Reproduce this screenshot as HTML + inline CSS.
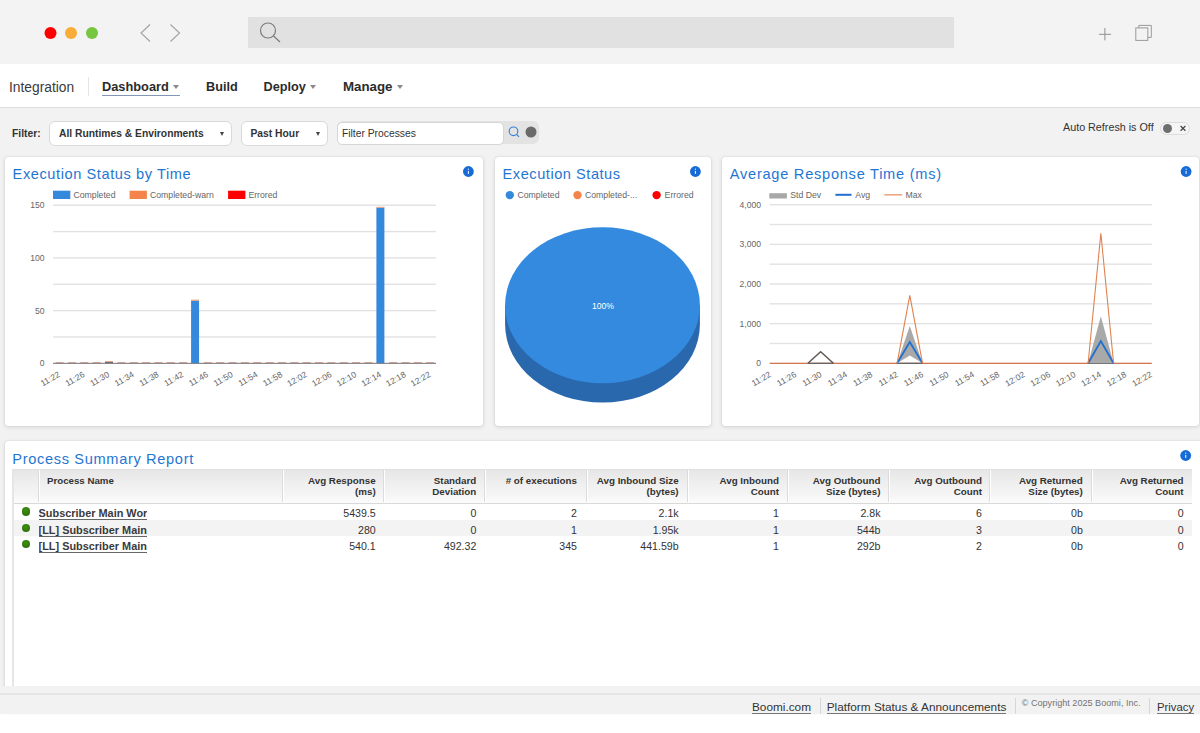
<!DOCTYPE html>
<html><head><meta charset="utf-8">
<style>
*{box-sizing:border-box;margin:0;padding:0}
html,body{width:1200px;height:733px;overflow:hidden;background:#fff;font-family:"Liberation Sans",sans-serif;color:#333}
.a{position:absolute;white-space:nowrap}
#top{position:absolute;left:0;top:0;width:1200px;height:64px;background:#f3f3f3}
#nav{position:absolute;left:0;top:64px;width:1200px;height:44px;background:#fff;border-bottom:1px solid #dcdcdc}
#page{position:absolute;left:0;top:108px;width:1200px;height:606px;background:#f2f2f2}
.card{position:absolute;background:#fff;border-radius:3px;box-shadow:0 0 1px rgba(0,0,0,.22),0 1px 4px rgba(0,0,0,.13)}
.title{position:absolute;font-size:14.6px;color:#1f76d2;white-space:nowrap;line-height:17px}
.nav{font-size:13px;font-weight:bold;color:#2b2b2b;top:79.3px;line-height:15px}
.caret{position:absolute;width:0;height:0;border-left:3.5px solid transparent;border-right:3.5px solid transparent;border-top:4px solid #8a8a8a}
.dd{position:absolute;background:#fff;border:1px solid #d9d9d9;border-radius:6px}
.sm{font-size:8.6px;color:#666}
</style></head><body>
<div id="top"></div>
<div id="nav"></div>
<div id="page"></div>

<svg class="a" style="left:0;top:0" width="1200" height="64">
<circle cx="50.5" cy="33" r="6" fill="#ff0000"/>
<circle cx="71" cy="33" r="6" fill="#f9ad38"/>
<circle cx="92" cy="33" r="6" fill="#76c640"/>
<polyline points="150,24.5 141,33 150,41.5" fill="none" stroke="#a2a2a2" stroke-width="1.1"/>
<polyline points="170.5,24.5 179.5,33 170.5,41.5" fill="none" stroke="#a2a2a2" stroke-width="1.1"/>
<rect x="248" y="17" width="706" height="31" fill="#e1e1e1"/>
<circle cx="268" cy="30.5" r="7.5" fill="none" stroke="#7c7c7c" stroke-width="1.2"/>
<line x1="273.5" y1="36" x2="280" y2="42" stroke="#7c7c7c" stroke-width="1.2"/>
<line x1="1099" y1="34.3" x2="1111" y2="34.3" stroke="#8f8f8f" stroke-width="1"/>
<line x1="1104.9" y1="28" x2="1104.9" y2="40.4" stroke="#8f8f8f" stroke-width="1"/>
<rect x="1135.8" y="27.9" width="12" height="12.5" fill="none" stroke="#9a9a9a" stroke-width="1"/>
<path d="M1138.8 27.9 V25.4 H1151.3 V37.4 H1147.8" fill="none" stroke="#9a9a9a" stroke-width="1"/>
</svg>

<div class="a" style="left:9px;top:79.5px;font-size:13.8px;color:#3a3a3a">Integration</div>
<div class="a" style="left:88px;top:77px;width:1px;height:19px;background:#e4e4e4"></div>
<div class="a nav" style="left:102px;font-size:12.8px">Dashboard</div>
<div class="caret" style="left:173px;top:85px"></div>
<div class="a" style="left:102px;top:95.3px;width:78px;height:1.2px;background:#8296b5"></div>
<div class="a nav" style="left:206px;top:80px;font-size:12.7px">Build</div>
<div class="a nav" style="left:263.5px;top:80px;font-size:12.7px">Deploy</div>
<div class="caret" style="left:310px;top:85px"></div>
<div class="a nav" style="left:343px;font-size:13.3px">Manage</div>
<div class="caret" style="left:397px;top:85px"></div>

<div class="a" style="left:12px;top:128px;font-size:10.3px;font-weight:bold;color:#333">Filter:</div>
<div class="dd" style="left:49px;top:121px;width:183px;height:24.5px"></div>
<div class="a" style="left:59px;top:128px;font-size:10.3px;font-weight:bold;color:#333">All Runtimes &amp; Environments</div>
<div class="caret" style="left:219.5px;top:131.8px;border-top-width:4px;border-left-width:2.5px;border-right-width:2.5px;border-top-color:#444"></div>
<div class="dd" style="left:240.5px;top:121px;width:87px;height:24.5px"></div>
<div class="a" style="left:250.5px;top:128px;font-size:10.3px;font-weight:bold;color:#333">Past Hour</div>
<div class="caret" style="left:315.5px;top:131.8px;border-top-width:4px;border-left-width:2.5px;border-right-width:2.5px;border-top-color:#444"></div>
<div class="a" style="left:337px;top:121px;width:202px;height:23px;background:#e3e3e3;border-radius:6px"></div>
<div class="a" style="left:337px;top:121.5px;width:167px;height:23.5px;background:#fff;border:1px solid #d6d6d6;border-radius:5px"></div>
<div class="a" style="left:342px;top:127.5px;font-size:10.3px;color:#333">Filter Processes</div>
<svg class="a" style="left:505px;top:122px" width="36" height="22">
<circle cx="8.5" cy="9.3" r="4.3" fill="none" stroke="#3683dc" stroke-width="1.15"/>
<line x1="11.6" y1="12.4" x2="14" y2="14.8" stroke="#3683dc" stroke-width="1.2"/>
<circle cx="26" cy="10" r="5.5" fill="#6a6a6a"/>
</svg>
<div class="a" style="left:1063px;top:120.8px;font-size:10.75px;color:#333">Auto Refresh is Off</div>
<div class="a" style="left:1160px;top:121.5px;width:29.5px;height:13px;border:1px solid #dcdcdc;border-radius:7px;background:#f5f5f5"></div>
<svg class="a" style="left:1160px;top:121px" width="30" height="14">
<circle cx="7.5" cy="7.5" r="4.5" fill="#6e6e6e"/>
<path d="M20.6 5 L25.4 9.8 M25.4 5 L20.6 9.8" stroke="#484848" stroke-width="1.25"/>
</svg>

<div class="card" style="left:5px;top:156.5px;width:478px;height:269px"></div>
<div class="card" style="left:494.5px;top:156.5px;width:216px;height:269px"></div>
<div class="card" style="left:721.5px;top:156.5px;width:477.5px;height:269px"></div>
<div class="card" style="left:4.5px;top:440.5px;width:1200px;height:270px"></div>
<div class="title" style="left:12.6px;top:166px;letter-spacing:0.58px">Execution Status by Time</div>
<div class="title" style="left:502.6px;top:166px;letter-spacing:0.53px">Execution Status</div>
<div class="title" style="left:729.8px;top:166px;letter-spacing:0.74px">Average Response Time (ms)</div>
<div class="title" style="left:12.3px;top:451px;letter-spacing:0.66px">Process Summary Report</div>
<svg class="a" style="left:0;top:0" width="1200" height="733" font-family="Liberation Sans" >
<rect x="53" y="190.7" width="17.3" height="8.3" fill="#3589dc"/>
<text x="73.5" y="197.8" font-size="8.7" fill="#666">Completed</text>
<rect x="129.6" y="190.7" width="17.3" height="8.3" fill="#f4844c"/>
<text x="150" y="197.8" font-size="8.7" fill="#666">Completed-warn</text>
<rect x="228.1" y="190.7" width="17.3" height="8.3" fill="#fe0000"/>
<text x="248.4" y="197.8" font-size="8.7" fill="#666">Errored</text>
<rect x="53" y="204.50" width="383" height="1.4" fill="#e2e2e2"/>
<rect x="53" y="230.85" width="383" height="1.4" fill="#e2e2e2"/>
<rect x="53" y="257.20" width="383" height="1.4" fill="#e2e2e2"/>
<rect x="53" y="283.55" width="383" height="1.4" fill="#e2e2e2"/>
<rect x="53" y="309.90" width="383" height="1.4" fill="#e2e2e2"/>
<rect x="53" y="336.25" width="383" height="1.4" fill="#e2e2e2"/>
<text x="44.5" y="208.30" font-size="8.6" fill="#666" text-anchor="end">150</text>
<text x="44.5" y="261.00" font-size="8.6" fill="#666" text-anchor="end">100</text>
<text x="44.5" y="313.70" font-size="8.6" fill="#666" text-anchor="end">50</text>
<text x="44.5" y="366.40" font-size="8.6" fill="#666" text-anchor="end">0</text>
<rect x="55.58" y="362.1" width="8" height="1.1" fill="#d8a096"/>
<rect x="67.93" y="362.1" width="8" height="1.1" fill="#d8a096"/>
<rect x="80.29" y="362.1" width="8" height="1.1" fill="#d8a096"/>
<rect x="92.64" y="362.1" width="8" height="1.1" fill="#d8a096"/>
<rect x="105.00" y="362" width="8" height="1.2" fill="#4a5f8a"/>
<rect x="105.00" y="361.3" width="8" height="0.9" fill="#d98a5c"/>
<rect x="117.35" y="362.1" width="8" height="1.1" fill="#d8a096"/>
<rect x="129.71" y="362.1" width="8" height="1.1" fill="#d8a096"/>
<rect x="142.06" y="362.1" width="8" height="1.1" fill="#d8a096"/>
<rect x="154.42" y="362.1" width="8" height="1.1" fill="#d8a096"/>
<rect x="166.77" y="362.1" width="8" height="1.1" fill="#d8a096"/>
<rect x="179.13" y="362.1" width="8" height="1.1" fill="#d8a096"/>
<rect x="191.08" y="300.6" width="8" height="62.70" fill="#3589dc"/>
<rect x="191.08" y="299.6" width="8" height="1.2" fill="#e9a47c"/>
<rect x="203.84" y="362.1" width="8" height="1.1" fill="#d8a096"/>
<rect x="216.19" y="362.1" width="8" height="1.1" fill="#d8a096"/>
<rect x="228.55" y="362.1" width="8" height="1.1" fill="#d8a096"/>
<rect x="240.90" y="362.1" width="8" height="1.1" fill="#d8a096"/>
<rect x="253.25" y="362.1" width="8" height="1.1" fill="#d8a096"/>
<rect x="265.61" y="362.1" width="8" height="1.1" fill="#d8a096"/>
<rect x="277.96" y="362.1" width="8" height="1.1" fill="#d8a096"/>
<rect x="290.32" y="362.1" width="8" height="1.1" fill="#d8a096"/>
<rect x="302.67" y="362.1" width="8" height="1.1" fill="#d8a096"/>
<rect x="315.03" y="362.1" width="8" height="1.1" fill="#d8a096"/>
<rect x="327.38" y="362.1" width="8" height="1.1" fill="#d8a096"/>
<rect x="339.74" y="362.1" width="8" height="1.1" fill="#d8a096"/>
<rect x="352.09" y="362.1" width="8" height="1.1" fill="#d8a096"/>
<rect x="364.45" y="362.1" width="8" height="1.1" fill="#d8a096"/>
<rect x="376.40" y="207.6" width="8" height="155.70" fill="#3589dc"/>
<rect x="376.40" y="206.8" width="8" height="1" fill="#e9a47c"/>
<rect x="389.16" y="362.1" width="8" height="1.1" fill="#d8a096"/>
<rect x="401.51" y="362.1" width="8" height="1.1" fill="#d8a096"/>
<rect x="413.87" y="362.1" width="8" height="1.1" fill="#d8a096"/>
<rect x="426.22" y="362.1" width="8" height="1.1" fill="#d8a096"/>
<rect x="53" y="362.8" width="383" height="1.2" fill="#777" opacity="0.85"/>
<text x="60.60" y="376.2" font-size="8.5" fill="#666" text-anchor="end" transform="rotate(-30 60.60 376.2)">11:22</text>
<text x="85.31" y="376.2" font-size="8.5" fill="#666" text-anchor="end" transform="rotate(-30 85.31 376.2)">11:26</text>
<text x="110.02" y="376.2" font-size="8.5" fill="#666" text-anchor="end" transform="rotate(-30 110.02 376.2)">11:30</text>
<text x="134.73" y="376.2" font-size="8.5" fill="#666" text-anchor="end" transform="rotate(-30 134.73 376.2)">11:34</text>
<text x="159.44" y="376.2" font-size="8.5" fill="#666" text-anchor="end" transform="rotate(-30 159.44 376.2)">11:38</text>
<text x="184.15" y="376.2" font-size="8.5" fill="#666" text-anchor="end" transform="rotate(-30 184.15 376.2)">11:42</text>
<text x="208.86" y="376.2" font-size="8.5" fill="#666" text-anchor="end" transform="rotate(-30 208.86 376.2)">11:46</text>
<text x="233.57" y="376.2" font-size="8.5" fill="#666" text-anchor="end" transform="rotate(-30 233.57 376.2)">11:50</text>
<text x="258.28" y="376.2" font-size="8.5" fill="#666" text-anchor="end" transform="rotate(-30 258.28 376.2)">11:54</text>
<text x="282.99" y="376.2" font-size="8.5" fill="#666" text-anchor="end" transform="rotate(-30 282.99 376.2)">11:58</text>
<text x="307.70" y="376.2" font-size="8.5" fill="#666" text-anchor="end" transform="rotate(-30 307.70 376.2)">12:02</text>
<text x="332.41" y="376.2" font-size="8.5" fill="#666" text-anchor="end" transform="rotate(-30 332.41 376.2)">12:06</text>
<text x="357.12" y="376.2" font-size="8.5" fill="#666" text-anchor="end" transform="rotate(-30 357.12 376.2)">12:10</text>
<text x="381.83" y="376.2" font-size="8.5" fill="#666" text-anchor="end" transform="rotate(-30 381.83 376.2)">12:14</text>
<text x="406.54" y="376.2" font-size="8.5" fill="#666" text-anchor="end" transform="rotate(-30 406.54 376.2)">12:18</text>
<text x="431.25" y="376.2" font-size="8.5" fill="#666" text-anchor="end" transform="rotate(-30 431.25 376.2)">12:22</text>
</svg>
<svg class="a" style="left:0;top:0" width="1200" height="733" font-family="Liberation Sans">
<circle cx="468.4" cy="171.5" r="5.4" fill="#166bd6"/><rect x="467.85" y="170.90" width="1.1" height="3" fill="#e8f0fb"/><circle cx="468.4" cy="169.20" r="0.65" fill="#e8f0fb"/>
<circle cx="695.4000000000001" cy="171.5" r="5.4" fill="#166bd6"/><rect x="694.85" y="170.90" width="1.1" height="3" fill="#e8f0fb"/><circle cx="695.4000000000001" cy="169.20" r="0.65" fill="#e8f0fb"/>
<circle cx="1186.1000000000001" cy="171.5" r="5.4" fill="#166bd6"/><rect x="1185.55" y="170.90" width="1.1" height="3" fill="#e8f0fb"/><circle cx="1186.1000000000001" cy="169.20" r="0.65" fill="#e8f0fb"/>
<circle cx="1185.7" cy="455.5" r="5.4" fill="#166bd6"/><rect x="1185.15" y="454.90" width="1.1" height="3" fill="#e8f0fb"/><circle cx="1185.7" cy="453.20" r="0.65" fill="#e8f0fb"/>
<circle cx="509.8" cy="195.1" r="4.2" fill="#3589dc"/>
<text x="517.5" y="198.2" font-size="8.7" fill="#666">Completed</text>
<circle cx="577.5" cy="195.1" r="4.2" fill="#f4844c"/>
<text x="585" y="198.2" font-size="8.7" fill="#666">Completed-...</text>
<circle cx="656.6" cy="195.1" r="4.2" fill="#fe0000"/>
<text x="664.6" y="198.2" font-size="8.7" fill="#666">Errored</text>
<path d="M505.1 305.2 V324.59999999999997 A97.4 78.0 0 0 0 699.9 324.59999999999997 V305.2 Z" fill="#2968ad"/>
<ellipse cx="602.5" cy="305.2" rx="97.4" ry="78.0" fill="#348ade"/>
<text x="603" y="308.6" font-size="8.6" fill="#fff" text-anchor="middle">100%</text>
<rect x="769.3" y="193.2" width="17.6" height="5.3" fill="#a8a8a8"/>
<text x="790.3" y="198" font-size="8.7" fill="#666">Std Dev</text>
<rect x="835.4" y="193.8" width="16.1" height="2" fill="#1f70d0"/>
<text x="855.3" y="198" font-size="8.7" fill="#666">Avg</text>
<rect x="884.3" y="194.3" width="18" height="1.1" fill="#e0824f"/>
<text x="905.4" y="198" font-size="8.7" fill="#666">Max</text>
<rect x="769.7" y="204.00" width="382.1" height="1.4" fill="#e2e2e2"/>
<rect x="769.7" y="223.82" width="382.1" height="1.4" fill="#e2e2e2"/>
<rect x="769.7" y="243.65" width="382.1" height="1.4" fill="#e2e2e2"/>
<rect x="769.7" y="263.48" width="382.1" height="1.4" fill="#e2e2e2"/>
<rect x="769.7" y="283.30" width="382.1" height="1.4" fill="#e2e2e2"/>
<rect x="769.7" y="303.12" width="382.1" height="1.4" fill="#e2e2e2"/>
<rect x="769.7" y="322.95" width="382.1" height="1.4" fill="#e2e2e2"/>
<rect x="769.7" y="342.78" width="382.1" height="1.4" fill="#e2e2e2"/>
<text x="761" y="207.80" font-size="8.6" fill="#666" text-anchor="end">4,000</text>
<text x="761" y="247.45" font-size="8.6" fill="#666" text-anchor="end">3,000</text>
<text x="761" y="287.10" font-size="8.6" fill="#666" text-anchor="end">2,000</text>
<text x="761" y="326.75" font-size="8.6" fill="#666" text-anchor="end">1,000</text>
<text x="761" y="366.40" font-size="8.6" fill="#666" text-anchor="end">0</text>
<rect x="769.7" y="362.7" width="382.1" height="1.3" fill="#d2764f"/>
<rect x="807.91" y="362.7" width="25.47" height="1.3" fill="#666"/>
<polyline points="807.91,363.3 820.65,351.80 833.38,363.3" fill="none" stroke="#635853" stroke-width="1.5"/>
<rect x="897.07" y="362.7" width="25.47" height="1.3" fill="#666"/>
<polygon points="897.07,363.3 909.80,326.03 922.54,363.3 909.80,355.53" fill="#a9a9a9"/>
<polyline points="897.07,363.3 909.80,342.01 922.54,363.3" fill="none" stroke="#1f70d0" stroke-width="1.8"/>
<polyline points="897.07,363.3 909.80,295.30 922.54,363.3" fill="none" stroke="#e0824f" stroke-width="1.1"/>
<rect x="1088.12" y="362.7" width="25.47" height="1.3" fill="#666"/>
<polygon points="1088.12,363.3 1100.85,316.31 1113.59,363.3 1100.85,363.30" fill="#a9a9a9"/>
<polyline points="1088.12,363.3 1100.85,341.10 1113.59,363.3" fill="none" stroke="#1f70d0" stroke-width="1.8"/>
<polyline points="1088.12,363.3 1100.85,233.29 1113.59,363.3" fill="none" stroke="#e0824f" stroke-width="1.1"/>
<text x="771.60" y="376.2" font-size="8.5" fill="#666" text-anchor="end" transform="rotate(-30 771.60 376.2)">11:22</text>
<text x="797.00" y="376.2" font-size="8.5" fill="#666" text-anchor="end" transform="rotate(-30 797.00 376.2)">11:26</text>
<text x="822.40" y="376.2" font-size="8.5" fill="#666" text-anchor="end" transform="rotate(-30 822.40 376.2)">11:30</text>
<text x="847.80" y="376.2" font-size="8.5" fill="#666" text-anchor="end" transform="rotate(-30 847.80 376.2)">11:34</text>
<text x="873.20" y="376.2" font-size="8.5" fill="#666" text-anchor="end" transform="rotate(-30 873.20 376.2)">11:38</text>
<text x="898.60" y="376.2" font-size="8.5" fill="#666" text-anchor="end" transform="rotate(-30 898.60 376.2)">11:42</text>
<text x="924.00" y="376.2" font-size="8.5" fill="#666" text-anchor="end" transform="rotate(-30 924.00 376.2)">11:46</text>
<text x="949.40" y="376.2" font-size="8.5" fill="#666" text-anchor="end" transform="rotate(-30 949.40 376.2)">11:50</text>
<text x="974.80" y="376.2" font-size="8.5" fill="#666" text-anchor="end" transform="rotate(-30 974.80 376.2)">11:54</text>
<text x="1000.20" y="376.2" font-size="8.5" fill="#666" text-anchor="end" transform="rotate(-30 1000.20 376.2)">11:58</text>
<text x="1025.60" y="376.2" font-size="8.5" fill="#666" text-anchor="end" transform="rotate(-30 1025.60 376.2)">12:02</text>
<text x="1051.00" y="376.2" font-size="8.5" fill="#666" text-anchor="end" transform="rotate(-30 1051.00 376.2)">12:06</text>
<text x="1076.40" y="376.2" font-size="8.5" fill="#666" text-anchor="end" transform="rotate(-30 1076.40 376.2)">12:10</text>
<text x="1101.80" y="376.2" font-size="8.5" fill="#666" text-anchor="end" transform="rotate(-30 1101.80 376.2)">12:14</text>
<text x="1127.20" y="376.2" font-size="8.5" fill="#666" text-anchor="end" transform="rotate(-30 1127.20 376.2)">12:18</text>
<text x="1152.60" y="376.2" font-size="8.5" fill="#666" text-anchor="end" transform="rotate(-30 1152.60 376.2)">12:22</text>
</svg>
<div class="a" style="left:13px;top:469px;width:1179px;height:34.6px;background:linear-gradient(#e6e6e6,#f0f0f0 45%,#f6f6f6 80%,#fcfcfc);border-top:1px solid #e0e0e0;border-bottom:1px solid #d9d9d9"></div>
<div class="a" style="left:12px;top:469px;width:2px;height:218px;background:#e6e6e6"></div>
<div class="a" style="left:37.9px;top:470px;width:1px;height:32px;background:#dcdcdc"></div>
<div class="a" style="left:38.9px;top:470px;width:1px;height:32px;background:#fff"></div>
<div class="a" style="left:282.2px;top:470px;width:1px;height:32px;background:#dcdcdc"></div>
<div class="a" style="left:283.2px;top:470px;width:1px;height:32px;background:#fff"></div>
<div class="a" style="left:383.3px;top:470px;width:1px;height:32px;background:#dcdcdc"></div>
<div class="a" style="left:384.3px;top:470px;width:1px;height:32px;background:#fff"></div>
<div class="a" style="left:483.8px;top:470px;width:1px;height:32px;background:#dcdcdc"></div>
<div class="a" style="left:484.8px;top:470px;width:1px;height:32px;background:#fff"></div>
<div class="a" style="left:586.0px;top:470px;width:1px;height:32px;background:#dcdcdc"></div>
<div class="a" style="left:587.0px;top:470px;width:1px;height:32px;background:#fff"></div>
<div class="a" style="left:686.5px;top:470px;width:1px;height:32px;background:#dcdcdc"></div>
<div class="a" style="left:687.5px;top:470px;width:1px;height:32px;background:#fff"></div>
<div class="a" style="left:787.3px;top:470px;width:1px;height:32px;background:#dcdcdc"></div>
<div class="a" style="left:788.3px;top:470px;width:1px;height:32px;background:#fff"></div>
<div class="a" style="left:888.0px;top:470px;width:1px;height:32px;background:#dcdcdc"></div>
<div class="a" style="left:889.0px;top:470px;width:1px;height:32px;background:#fff"></div>
<div class="a" style="left:988.8px;top:470px;width:1px;height:32px;background:#dcdcdc"></div>
<div class="a" style="left:989.8px;top:470px;width:1px;height:32px;background:#fff"></div>
<div class="a" style="left:1091.0px;top:470px;width:1px;height:32px;background:#dcdcdc"></div>
<div class="a" style="left:1092.0px;top:470px;width:1px;height:32px;background:#fff"></div>
<div class="a" style="left:47px;top:474.5px;font-size:9.7px;font-weight:bold;color:#333;line-height:12px">Process Name</div>
<div class="a" style="left:225.7px;width:150px;top:474.5px;font-size:9.8px;font-weight:bold;color:#333;line-height:11.6px;text-align:right">Avg Response<br>(ms)</div>
<div class="a" style="left:326.3px;width:150px;top:474.5px;font-size:9.8px;font-weight:bold;color:#333;line-height:11.6px;text-align:right">Standard<br>Deviation</div>
<div class="a" style="left:427.0px;width:150px;top:474.5px;font-size:9.8px;font-weight:bold;color:#333;line-height:11.6px;text-align:right"># of executions<br></div>
<div class="a" style="left:528.6px;width:150px;top:474.5px;font-size:9.8px;font-weight:bold;color:#333;line-height:11.6px;text-align:right">Avg Inbound Size<br>(bytes)</div>
<div class="a" style="left:629.0px;width:150px;top:474.5px;font-size:9.8px;font-weight:bold;color:#333;line-height:11.6px;text-align:right">Avg Inbound<br>Count</div>
<div class="a" style="left:730.5px;width:150px;top:474.5px;font-size:9.8px;font-weight:bold;color:#333;line-height:11.6px;text-align:right">Avg Outbound<br>Size (bytes)</div>
<div class="a" style="left:832.0px;width:150px;top:474.5px;font-size:9.8px;font-weight:bold;color:#333;line-height:11.6px;text-align:right">Avg Outbound<br>Count</div>
<div class="a" style="left:932.8px;width:150px;top:474.5px;font-size:9.8px;font-weight:bold;color:#333;line-height:11.6px;text-align:right">Avg Returned<br>Size (bytes)</div>
<div class="a" style="left:1033.6px;width:150px;top:474.5px;font-size:9.8px;font-weight:bold;color:#333;line-height:11.6px;text-align:right">Avg Returned<br>Count</div>
<div class="a" style="left:14px;top:520.3px;width:1178px;height:15.7px;background:#f3f3f3"></div>
<div class="a" style="left:21.7px;top:507.3px;width:8.4px;height:8.4px;border-radius:50%;background:radial-gradient(circle at 45% 35%,#3f9010,#286808)"></div>
<div class="a" style="left:38.6px;top:506.8px;width:108.5px;overflow:hidden;font-size:10.9px;font-weight:bold;color:#3a3a3a;line-height:12px;padding-bottom:3px;"><span style="border-bottom:1.1px solid #666">Subscriber Main Workflow</span></div>
<div class="a" style="left:275.7px;width:100px;top:507.3px;font-size:10.6px;color:#333;line-height:12px;text-align:right">5439.5</div>
<div class="a" style="left:376.3px;width:100px;top:507.3px;font-size:10.6px;color:#333;line-height:12px;text-align:right">0</div>
<div class="a" style="left:477.0px;width:100px;top:507.3px;font-size:10.6px;color:#333;line-height:12px;text-align:right">2</div>
<div class="a" style="left:578.6px;width:100px;top:507.3px;font-size:10.6px;color:#333;line-height:12px;text-align:right">2.1k</div>
<div class="a" style="left:679.0px;width:100px;top:507.3px;font-size:10.6px;color:#333;line-height:12px;text-align:right">1</div>
<div class="a" style="left:780.5px;width:100px;top:507.3px;font-size:10.6px;color:#333;line-height:12px;text-align:right">2.8k</div>
<div class="a" style="left:882.0px;width:100px;top:507.3px;font-size:10.6px;color:#333;line-height:12px;text-align:right">6</div>
<div class="a" style="left:982.8px;width:100px;top:507.3px;font-size:10.6px;color:#333;line-height:12px;text-align:right">0b</div>
<div class="a" style="left:1083.6px;width:100px;top:507.3px;font-size:10.6px;color:#333;line-height:12px;text-align:right">0</div>
<div class="a" style="left:21.7px;top:524.0px;width:8.4px;height:8.4px;border-radius:50%;background:radial-gradient(circle at 45% 35%,#3f9010,#286808)"></div>
<div class="a" style="left:38.6px;top:523.5px;width:108.5px;overflow:hidden;font-size:10.9px;font-weight:bold;color:#3a3a3a;line-height:12px;padding-bottom:3px;"><span style="border-bottom:1.1px solid #666">[LL] Subscriber Main</span></div>
<div class="a" style="left:275.7px;width:100px;top:524px;font-size:10.6px;color:#333;line-height:12px;text-align:right">280</div>
<div class="a" style="left:376.3px;width:100px;top:524px;font-size:10.6px;color:#333;line-height:12px;text-align:right">0</div>
<div class="a" style="left:477.0px;width:100px;top:524px;font-size:10.6px;color:#333;line-height:12px;text-align:right">1</div>
<div class="a" style="left:578.6px;width:100px;top:524px;font-size:10.6px;color:#333;line-height:12px;text-align:right">1.95k</div>
<div class="a" style="left:679.0px;width:100px;top:524px;font-size:10.6px;color:#333;line-height:12px;text-align:right">1</div>
<div class="a" style="left:780.5px;width:100px;top:524px;font-size:10.6px;color:#333;line-height:12px;text-align:right">544b</div>
<div class="a" style="left:882.0px;width:100px;top:524px;font-size:10.6px;color:#333;line-height:12px;text-align:right">3</div>
<div class="a" style="left:982.8px;width:100px;top:524px;font-size:10.6px;color:#333;line-height:12px;text-align:right">0b</div>
<div class="a" style="left:1083.6px;width:100px;top:524px;font-size:10.6px;color:#333;line-height:12px;text-align:right">0</div>
<div class="a" style="left:21.7px;top:540.1px;width:8.4px;height:8.4px;border-radius:50%;background:radial-gradient(circle at 45% 35%,#3f9010,#286808)"></div>
<div class="a" style="left:38.6px;top:539.6px;width:108.5px;overflow:hidden;font-size:10.9px;font-weight:bold;color:#3a3a3a;line-height:12px;padding-bottom:3px;"><span style="border-bottom:1.1px solid #666">[LL] Subscriber Main</span></div>
<div class="a" style="left:275.7px;width:100px;top:540.1px;font-size:10.6px;color:#333;line-height:12px;text-align:right">540.1</div>
<div class="a" style="left:376.3px;width:100px;top:540.1px;font-size:10.6px;color:#333;line-height:12px;text-align:right">492.32</div>
<div class="a" style="left:477.0px;width:100px;top:540.1px;font-size:10.6px;color:#333;line-height:12px;text-align:right">345</div>
<div class="a" style="left:578.6px;width:100px;top:540.1px;font-size:10.6px;color:#333;line-height:12px;text-align:right">441.59b</div>
<div class="a" style="left:679.0px;width:100px;top:540.1px;font-size:10.6px;color:#333;line-height:12px;text-align:right">1</div>
<div class="a" style="left:780.5px;width:100px;top:540.1px;font-size:10.6px;color:#333;line-height:12px;text-align:right">292b</div>
<div class="a" style="left:882.0px;width:100px;top:540.1px;font-size:10.6px;color:#333;line-height:12px;text-align:right">2</div>
<div class="a" style="left:982.8px;width:100px;top:540.1px;font-size:10.6px;color:#333;line-height:12px;text-align:right">0b</div>
<div class="a" style="left:1083.6px;width:100px;top:540.1px;font-size:10.6px;color:#333;line-height:12px;text-align:right">0</div>
<div class="a" style="left:0;top:686px;width:1200px;height:28px;background:#f2f2f2"></div><div class="a" style="left:0;top:693px;width:1200px;height:2px;background:#e5e5e5"></div>
<div class="a" style="left:752px;top:701px;font-size:11.8px;color:#333;line-height:12px;border-bottom:1.2px solid #777">Boomi.com</div>
<div class="a" style="left:819.5px;top:698px;width:1px;height:16px;background:#d6d6d6"></div>
<div class="a" style="left:826.7px;top:701px;font-size:11.8px;color:#333;line-height:12px;border-bottom:1.2px solid #777">Platform Status &amp; Announcements</div>
<div class="a" style="left:1014.5px;top:698px;width:1px;height:16px;background:#d6d6d6"></div>
<div class="a" style="left:1021.7px;top:698.3px;font-size:9.1px;color:#727272;line-height:11px">© Copyright 2025 Boomi, Inc.</div>
<div class="a" style="left:1149px;top:698px;width:1px;height:16px;background:#d6d6d6"></div>
<div class="a" style="left:1157px;top:701px;font-size:11.3px;color:#333;line-height:12px;border-bottom:1.2px solid #777">Privacy</div>
</body></html>
